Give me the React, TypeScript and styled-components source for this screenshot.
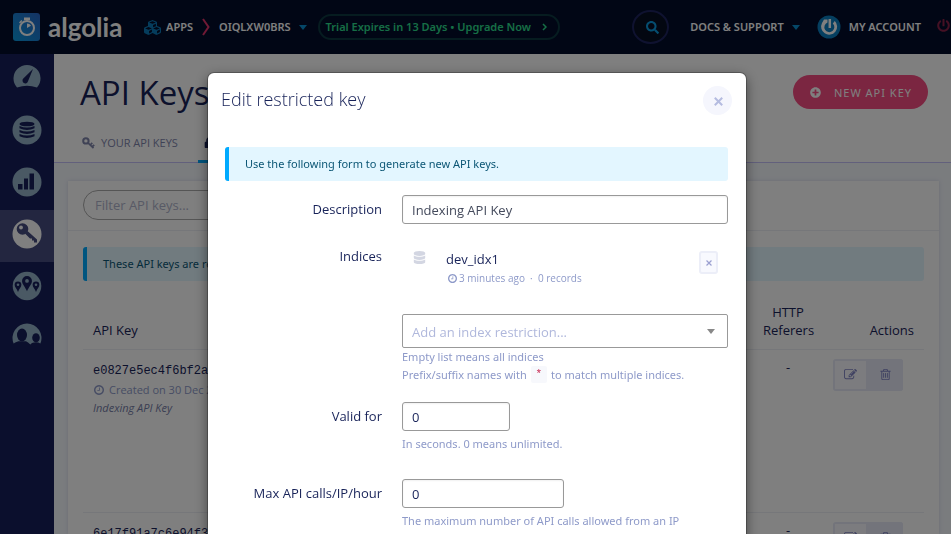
import React from "react";
import styled, { createGlobalStyle, css } from "styled-components";
import { FaCubes, FaDatabase, FaLock, FaPlusCircle, FaPowerOff, FaSearch } from "react-icons/fa";

const sans = '"Open Sans", "Noto Sans", sans-serif';
const small = '"Noto Sans", "Open Sans", sans-serif';
const navy = "#182359";
const muted = "#8e9ac9";

const GlobalStyle = createGlobalStyle`
  *, *::before, *::after { box-sizing: border-box; }
  html, body, #root { height: 100%; }
  body { margin: 0; overflow: hidden; font: 13px/18px ${sans}; color: ${navy}; background: #f5f8fd; }
  button, input, select { font-family: inherit; margin: 0; }
  a { color: inherit; text-decoration: none; }
  h1, h2, p { margin: 0; font-weight: 400; }
`;

const Page = styled.div`
  height: 100vh;
  display: flex;
  flex-direction: column;
  overflow: hidden;
`;

/* ---------- top bar ---------- */

const TopBar = styled.header`
  flex: none;
  display: flex;
  align-items: center;
  height: 54px;
  padding-left: 13px;
  overflow: hidden;
  white-space: nowrap;
  background: #020d2a;
  color: #fff;
`;

const Logo = styled.a`
  display: flex;
  align-items: center;
  gap: 8px;
  width: 131px;
  font: 700 26px/34px Lato, sans-serif;
`;

const NavLink = styled.a`
  display: flex;
  align-items: center;
  gap: 5px;
  font-family: ${small};
  font-size: 11px;
  font-weight: 600;
`;

const Caret = styled.span<{ $grey?: boolean }>`
  border: 4px solid transparent;
  border-top: 5px solid ${(p) => (p.$grey ? "#888" : "#0a8fd0")};
  border-bottom: 0;
  margin-left: 3px;
`;

const Chevron = styled.svg`
  flex: none;
  margin: 0 9px;
`;

const Trial = styled.a`
  display: flex;
  align-items: center;
  justify-content: space-between;
  width: 242px;
  height: 26px;
  margin-left: 11px;
  padding: 0 11px 0 6px;
  border: 2px solid #0c3840;
  border-radius: 13px;
  color: #2cdc8c;
  font-family: ${small};
  font-size: 11px;
  font-weight: 600;
`;

const SearchButton = styled.button`
  display: flex;
  align-items: center;
  justify-content: center;
  width: 37px;
  height: 34px;
  margin: 0 21px 0 auto;
  padding: 0 0 0 3px;
  border: 2px solid #1e2460;
  border-radius: 50%;
  background: #070f22;
  color: #0a9ae0;
`;

const Account = styled(NavLink)`
  gap: 8px;
  margin: 0 16px 0 17px;
`;

const PowerButton = styled.button`
  flex: none;
  display: flex;
  width: 14px;
  padding: 0;
  border: 0;
  background: none;
  color: #8a2148;
  margin-bottom: 3px;
`;

/* ---------- shell ---------- */

const Shell = styled.div`
  flex: 1;
  display: flex;
  min-height: 0;
`;

const Sidebar = styled.nav`
  flex: none;
  width: 54px;
  background: #171f5a;
`;

const SideItem = styled.a<{ $active?: boolean }>`
  display: flex;
  align-items: center;
  justify-content: center;
  height: 52px;
  padding-bottom: 4px;
  --disc: ${(p) => (p.$active ? "#fff" : "#94b2c8")};
  --ink: ${(p) => (p.$active ? "#464d80" : "#171f5a")};
  background: ${(p) => (p.$active ? "#464d80" : "transparent")};
`;

const Main = styled.main`
  flex: 1;
  min-width: 0;
  display: flex;
  flex-direction: column;
`;

const PageHead = styled.div`
  flex: none;
  background: #fff;
  border-bottom: 1px solid #c4c0f8;
`;

const TitleRow = styled.div`
  display: flex;
  align-items: center;
  justify-content: space-between;
  height: 76px;
  padding: 0 23px 0 26px;
`;

const PageTitle = styled.h1`
  padding-top: 2px;
  font-size: 33px;
  line-height: 40px;
`;

const NewKey = styled.button`
  display: flex;
  align-items: center;
  gap: 13px;
  height: 34px;
  padding: 0 16px 0 17px;
  border: 0;
  border-radius: 17px;
  background: #f64c82;
  color: #fff;
  font-family: ${small};
  font-size: 11px;
  letter-spacing: 1px;
`;

const Tabs = styled.div`
  display: flex;
  height: 32px;
  padding-left: 22px;
`;

const Tab = styled.a<{ $active?: boolean }>`
  display: flex;
  align-items: center;
  gap: 6px;
  padding: 0 6px 7px;
  font-size: 11px;
  color: ${(p) => (p.$active ? navy : "#7f85ab")};
  margin-bottom: -1px;
  ${(p) =>
    p.$active &&
    css`
      margin-left: 14px;
      border-bottom: 3px solid #00aaff;
      padding-bottom: 5px;
    `}
`;

const Card = styled.section`
  flex: 1;
  min-height: 0;
  margin: 18px 12px 0 14px;
  background: #fff;
  box-shadow: 0 0 4px rgba(120, 130, 180, 0.25);
  overflow: hidden;
`;

const FilterBar = styled.div`
  padding: 9px 15px 10px;
  border-bottom: 1px solid #eceef4;
`;

const FilterInput = styled.input`
  display: block;
  width: 280px;
  height: 30px;
  padding: 0 11px;
  border: 1px solid #aaa;
  border-radius: 15px;
  background: #fff;
  font-size: 13px;
  &::placeholder { color: #b0b4cc; opacity: 1; }
`;

const CardBody = styled.div`
  padding: 16px 15px 0;
`;

const Notice = styled.p`
  padding: 8px 16px;
  border-left: 4px solid #00aaff;
  border-radius: 3px;
  background: #e3f6ff;
  color: #0b5675;
  font-family: ${small};
  font-size: 11px;
  line-height: 18px;
`;

const KeyTable = styled.table`
  width: 100%;
  margin-top: 13px;
  table-layout: fixed;
  border-collapse: collapse;
  th {
    height: 55px;
    padding: 0 10px 10px;
    vertical-align: bottom;
    font-weight: 500;
  }
  td {
    height: 163px;
    padding: 9px 10px 0;
    vertical-align: top;
    border-top: 1px solid #eceef4;
  }
`;

const HeadCell = styled.th<{ $align: string; $w?: number }>`
  text-align: ${(p) => p.$align};
  width: ${(p) => (p.$w ? p.$w + "px" : "auto")};
`;

const KeyValue = styled.div`
  font: 12px/24px "Liberation Mono", monospace;
  white-space: nowrap;
`;

const Created = styled.div`
  display: flex;
  align-items: center;
  gap: 5px;
  padding-left: 1px;
  color: ${muted};
  font-size: 11px;
  line-height: 14px;
  white-space: nowrap;
`;

const KeyName = styled.em`
  display: block;
  color: #757ca6;
  font-size: 11px;
  line-height: 22px;
`;

const DashCell = styled.td`
  text-align: center;
  line-height: 16px;
`;

const Actions = styled.div`
  display: flex;
  width: 70px;
  height: 32px;
  border-radius: 3px;
  overflow: hidden;
`;

const ActionButton = styled.button<{ $filled?: boolean }>`
  flex: 1;
  display: flex;
  align-items: center;
  justify-content: center;
  padding: 0;
  border: 2px solid #e6e9f6;
  background: ${(p) => (p.$filled ? "#e6e9f6" : "#f8f9fe")};
  color: #8084c4;
`;

/* ---------- dialog ---------- */

const Backdrop = styled.div`
  position: fixed;
  inset: 0;
  display: flex;
  justify-content: center;
  align-items: flex-start;
  padding: 73px 16px 0 19px;
  overflow: hidden;
  background: rgba(0, 0, 0, 0.5);
`;

const Dialog = styled.section`
  width: 538px;
  min-height: 100vh;
  border-radius: 6px;
  background: #fff;
  box-shadow: 0 0 0 1px rgba(0, 0, 0, 0.25), 0 4px 13px rgba(0, 0, 0, 0.5);
`;

const DialogHead = styled.header`
  display: flex;
  align-items: center;
  justify-content: space-between;
  height: 54px;
  padding: 0 14px 0 13px;
`;

const DialogTitle = styled.h2`
  padding-bottom: 2px;
  font-size: 18px;
  font-weight: 300;
  line-height: 24px;
`;

const CloseButton = styled.button`
  display: flex;
  align-items: center;
  justify-content: center;
  width: 29px;
  height: 29px;
  padding: 2px 0 0 2px;
  border: 0;
  border-radius: 50%;
  background: #f5f6fd;
  color: #b5bce0;
`;

const Form = styled.form`
  padding: 20px 18px 0 17px;
`;

const Field = styled.div<{ $top: number }>`
  display: grid;
  grid-template-columns: 157px 1fr;
  column-gap: 20px;
  margin-top: ${(p) => p.$top}px;
`;

const Label = styled.label`
  padding-top: 5px;
  text-align: right;
  font-weight: 500;
  line-height: 18px;
`;

const TextInput = styled.input<{ $w?: number }>`
  display: block;
  width: ${(p) => (p.$w ? p.$w + "px" : "100%")};
  height: 29px;
  padding: 0 9px;
  border: 1px solid #999;
  border-radius: 3px;
  background: #fff;
  box-shadow: inset 0 1px 2px rgba(0, 0, 0, 0.06);
  color: #444a5c;
  font-size: 13px;
`;

const NumberInput = styled(TextInput)`
  color: ${navy};
`;

const Help = styled.p`
  margin-top: 4px;
  padding-right: 16px;
  color: ${muted};
  font-family: ${small};
  font-size: 11px;
  line-height: 18px;
`;

const SelectHelp = styled(Help)`
  margin-top: 0;
`;

const Code = styled.code`
  display: inline-block;
  height: 17px;
  margin: 0 1px;
  padding: 0 5px;
  border-radius: 2px;
  background: #f7f8fc;
  color: #c7254e;
  font: 11px/17px "Liberation Mono", monospace;
  vertical-align: top;
`;

const IndexRow = styled.div`
  display: flex;
  padding: 9px 10px 0 11px;
  color: #d3d6e2;
`;

const IndexText = styled.div`
  flex: 1;
  margin-left: 20px;
  color: ${navy};
  font-weight: 500;
  line-height: 16px;
`;

const IndexMeta = styled.div`
  display: flex;
  align-items: center;
  gap: 2px;
  padding-left: 2px;
  color: ${muted};
  font-size: 10px;
  font-weight: 400;
  line-height: 22px;
`;

const RemoveButton = styled.button`
  width: 19px;
  height: 23px;
  padding: 0;
  display: flex;
  align-items: center;
  justify-content: center;
  border: 2px solid #eceef8;
  border-radius: 3px;
  background: #f8f9fe;
  color: #9a9fd0;
`;

const SelectWrap = styled.div`
  display: grid;
  align-items: center;
  margin-top: 25px;
  > * { grid-area: 1 / 1; }
  > span { justify-self: end; margin-right: 13px; pointer-events: none; }
`;

const IndexSelect = styled.select`
  appearance: none;
  width: 100%;
  height: 34px;
  padding: 2px 9px 0;
  border: 1px solid #999;
  border-radius: 2px;
  background: #fff;
  color: #b0b8dc;
  font-size: 13px;
`;

/* ---------- icons ---------- */

const ClockIcon = ({ size }: { size: number }) => (
  <svg width={size} height={size} viewBox="0 128 1536 1536" fill="currentColor" aria-hidden>
    <path d="M896 544v448q0 14-9 23t-23 9h-320q-14 0-23-9t-9-23v-64q0-14 9-23t23-9h224v-352q0-14 9-23t23-9h64q14 0 23 9t9 23zm416 352q0-148-73-273t-198-198-273-73-273 73-198 198-73 273 73 273 198 198 273 73 273-73 198-198 73-273zm224 0q0 209-103 385.5t-279.5 279.5-385.5 103-385.5-103-279.5-279.5-103-385.5 103-385.5 279.5-279.5 385.5-103 385.5 103 279.5 279.5 103 385.5z" />
  </svg>
);

const EditIcon = () => (
  <svg width="13" height="13" viewBox="0 0 1792 1792" fill="currentColor" aria-hidden>
    <path d="M888 1184l116-116-152-152-116 116v56h96v96h56zm440-720q-16-16-33 1l-350 350q-17 17-1 33t33-1l350-350q17-17 1-33zm80 594v190q0 119-84.5 203.5t-203.5 84.5h-832q-119 0-203.5-84.5t-84.5-203.5v-832q0-119 84.5-203.5t203.5-84.5h832q63 0 117 25 15 7 18 23 3 17-9 29l-49 49q-14 14-32 8-23-6-45-6h-832q-66 0-113 47t-47 113v832q0 66 47 113t113 47h832q66 0 113-47t47-113v-126q0-13 9-22l64-64q15-15 35-7t20 29zm-96-738l288 288-672 672h-288v-288zm444 132l-92 92-288-288 92-92q28-28 68-28t68 28l152 152q28 28 28 68t-28 68z" />
  </svg>
);

const TrashIcon = () => (
  <svg width="13" height="13" viewBox="0 0 1792 1792" fill="currentColor" aria-hidden>
    <path d="M704 736v576q0 14-9 23t-23 9h-64q-14 0-23-9t-9-23v-576q0-14 9-23t23-9h64q14 0 23 9t9 23zm256 0v576q0 14-9 23t-23 9h-64q-14 0-23-9t-9-23v-576q0-14 9-23t23-9h64q14 0 23 9t9 23zm256 0v576q0 14-9 23t-23 9h-64q-14 0-23-9t-9-23v-576q0-14 9-23t23-9h64q14 0 23 9t9 23zm128 724v-948h-896v948q0 22 7 40.5t14.5 27 10.5 8.5h832q3 0 10.5-8.5t14.5-27 7-40.5zm-672-1076h448l-48-117q-7-9-17-11h-317q-10 2-17 11zm928 32v64q0 14-9 23t-23 9h-96v948q0 83-47 143.5t-113 60.5h-832q-66 0-113-58.5t-47-141.5v-952h-96q-14 0-23-9t-9-23v-64q0-14 9-23t23-9h309l70-167q15-37 54-63t79-26h320q40 0 79 26t54 63l70 167h309q14 0 23 9t9 23z" />
  </svg>
);

const CrossIcon = ({ size, stroke }: { size: number; stroke: number }) => (
  <svg width={size} height={size} viewBox="0 0 8 8" stroke="currentColor" strokeWidth={stroke} aria-hidden>
    <path d="M0.7 0.7 7.3 7.3M7.3 0.7 0.7 7.3" />
  </svg>
);

const OutlineKeyIcon = () => (
  <svg width="13" height="12" viewBox="0 0 13 12" fill="none" stroke="currentColor" aria-hidden>
    <circle cx="3.900" cy="3.900" r="2.700" strokeWidth="2" />
    <path d="M6 5.800 11.500 11.200M8.200 8 10.300 5.900M10.200 9.900 12.200 7.900" strokeWidth="1.700" />
  </svg>
);

const LogoMark = () => (
  <svg width="27" height="28" viewBox="0 0 27 28" aria-hidden>
    <defs>
      <linearGradient id="mark" x1="0" y1="1" x2="1" y2="0">
        <stop offset="0" stopColor="#0a9ae0" />
        <stop offset="1" stopColor="#2a66c8" />
      </linearGradient>
    </defs>
    <rect width="27" height="28" rx="3" fill="url(#mark)" />
    <circle cx="14" cy="15" r="7" fill="none" stroke="#fff" strokeWidth="2" />
    <path d="M11 4.500h6v2.500h-6zM6 9.500 8.300 7l1 1L7 10.500z" fill="#fff" />
    <path d="M14 10.500v4.500l4-2.200a4.600 4.600 0 0 0-4-2.300z" fill="#fff" />
  </svg>
);

const Avatar = () => (
  <svg width="24" height="24" viewBox="0 0 24 24" aria-hidden>
    <circle cx="12" cy="12" r="11.500" fill="#0b7fc0" />
    <path d="M7 4.500H10.500V7.500A5 5 0 1 0 15.800 8.500L17.800 6A8 8 0 1 1 5 8z" fill="#fff" />
    <path d="M12.800 4v9" stroke="#fff" strokeWidth="2.500" />
  </svg>
);

const disc = "var(--disc)";
const ink = "var(--ink)";

const GaugeIcon = () => (
  <svg width="30" height="30" viewBox="0 0 30 30" aria-hidden>
    <path d="M5 24.500A13.500 13.500 0 1 1 25 24.500Q15 21 5 24.500z" fill={disc} />
    <path d="M21 6 16 18.300A2.800 2.800 0 1 1 11.300 15.600z" fill={ink} />
  </svg>
);

const StackIcon = () => (
  <svg width="30" height="30" viewBox="0 0 30 30" aria-hidden>
    <circle cx="15" cy="15" r="14.500" fill={disc} />
    <g fill={ink}>
      <ellipse cx="15" cy="9" rx="7.500" ry="2.300" />
      <path d="M7.500 11q7.500 3 15 0v2.200q-7.500 3.600-15 0zM7.500 15q7.500 3 15 0v2.200q-7.500 3.600-15 0zM7.500 19q7.500 3 15 0v2.200q-7.500 3.600-15 0z" />
    </g>
  </svg>
);

const BarsIcon = () => (
  <svg width="30" height="30" viewBox="0 0 30 30" aria-hidden>
    <circle cx="15" cy="15" r="14.500" fill={disc} />
    <path d="M6 17h4.500v5.500H6zM12 11.500h4v11h-4zM17.500 6.500H22v16h-4.500z" fill={ink} />
  </svg>
);

const KeyIcon = () => (
  <svg width="30" height="30" viewBox="0 0 30 30" aria-hidden>
    <circle cx="15" cy="15" r="14.500" fill={disc} />
    <circle cx="10.500" cy="10" r="5.800" fill={ink} />
    <circle cx="9" cy="8.500" r="1.900" fill={disc} />
    <path d="M13 14.500 15.500 12 25 20.500V23.500H22V21.500H20V19.500H18z" fill={ink} />
  </svg>
);

const pin = "M0-5.500A4.500 4.500 0 0 1 4.500-1C4.500 2 1.500 4.500 0 8.500-1.500 4.500-4.500 2-4.500-1A4.500 4.500 0 0 1 0-5.500z";

const PinsIcon = () => (
  <svg width="30" height="30" viewBox="0 0 30 30" aria-hidden>
    <circle cx="15" cy="15" r="14.300" fill={disc} />
    {[["15", "11", 1.1], ["6", "14.500", 0.75], ["24", "14.500", 0.75]].map(([x, y, s]) => (
      <g key={x} transform={`translate(${x} ${y}) scale(${s})`}>
        <path d={pin} fill={ink} />
        <circle cy="-1" r="1.700" fill={disc} />
      </g>
    ))}
  </svg>
);

const UsersIcon = () => (
  <svg width="30" height="30" viewBox="0 0 30 30" aria-hidden>
    <path d="M1.600 20.500A14.500 14.500 0 1 1 28.400 20.500Q26.500 19.300 24 19.300T20 20L18.300 21.500Q16 19 14 18.300H6.500Q3.500 19 1.600 20.500z" fill={disc} />
    <ellipse cx="10" cy="12" rx="5" ry="6.500" fill={ink} />
    <ellipse cx="24" cy="14.800" rx="3.800" ry="4.500" fill={ink} />
  </svg>
);

const sideItems = [
  { name: "Dashboard", Icon: GaugeIcon },
  { name: "Indices", Icon: StackIcon },
  { name: "Analytics", Icon: BarsIcon },
  { name: "API Keys", Icon: KeyIcon, active: true },
  { name: "Infrastructure", Icon: PinsIcon },
  { name: "Team", Icon: UsersIcon },
];

const keys = [
  { value: "e0827e5ec4f6bf2a81", created: "Created on 30 Dec 2016", name: "Indexing API Key" },
  { value: "6e17f91a7c6e94f3b2", created: "Created on 30 Dec 2016", name: "Search API Key" },
];

export default function App() {
  return (
    <>
      <GlobalStyle />
      <Page>
        <TopBar>
          <Logo href="#"><LogoMark />algolia</Logo>
          <NavLink href="#apps"><FaCubes size={17} color="#0a78b8" />APPS</NavLink>
          <Chevron width="8" height="18" viewBox="0 0 8 18" fill="none" stroke="#e0336a" strokeWidth="2">
            <path d="M1 1 6.500 9 1 17" />
          </Chevron>
          <NavLink href="#app">OIQLXW0BRS<Caret /></NavLink>
          <Trial href="#upgrade">
            Trial Expires in 13 Days • Upgrade Now
            <svg width="5" height="8" viewBox="0 0 5 8" fill="none" stroke="currentColor" strokeWidth="1.500"><path d="M1 1 4 4 1 7" /></svg>
          </Trial>
          <SearchButton aria-label="Search"><FaSearch size={13} /></SearchButton>
          <NavLink href="#docs">DOCS &amp; SUPPORT<Caret /></NavLink>
          <Account href="#account"><Avatar />MY ACCOUNT</Account>
          <PowerButton aria-label="Log out"><FaPowerOff size={13} /></PowerButton>
        </TopBar>
        <Shell>
          <Sidebar>
            {sideItems.map(({ name, Icon, active }) => (
              <SideItem key={name} href="#" aria-label={name} $active={active}><Icon /></SideItem>
            ))}
          </Sidebar>
          <Main>
            <PageHead>
              <TitleRow>
                <PageTitle>API Keys</PageTitle>
                <NewKey><FaPlusCircle size={11} />NEW API KEY</NewKey>
              </TitleRow>
              <Tabs>
                <Tab href="#yours"><OutlineKeyIcon />YOUR API KEYS</Tab>
                <Tab href="#restricted" $active><FaLock size={11} />RESTRICTED API KEYS</Tab>
              </Tabs>
            </PageHead>
            <Card>
              <FilterBar><FilterInput aria-label="Filter API keys" placeholder="Filter API keys..." /></FilterBar>
              <CardBody>
                <Notice>These API keys are restricted.</Notice>
                <KeyTable>
                  <thead>
                    <tr>
                      <HeadCell $align="left">API Key</HeadCell>
                      <HeadCell $align="center" $w={70}>HTTP Referers</HeadCell>
                      <HeadCell $align="right" $w={101}>Actions</HeadCell>
                    </tr>
                  </thead>
                  <tbody>
                    {keys.map((k) => (
                      <tr key={k.value}>
                        <td>
                          <KeyValue>{k.value}</KeyValue>
                          <Created><ClockIcon size={10} />{k.created}</Created>
                          <KeyName>{k.name}</KeyName>
                        </td>
                        <DashCell>-</DashCell>
                        <td>
                          <Actions>
                            <ActionButton aria-label="Edit"><EditIcon /></ActionButton>
                            <ActionButton aria-label="Delete" $filled><TrashIcon /></ActionButton>
                          </Actions>
                        </td>
                      </tr>
                    ))}
                  </tbody>
                </KeyTable>
              </CardBody>
            </Card>
          </Main>
        </Shell>
      </Page>
      <Backdrop>
        <Dialog role="dialog" aria-modal="true" aria-labelledby="dialog-title">
          <DialogHead>
            <DialogTitle id="dialog-title">Edit restricted key</DialogTitle>
            <CloseButton aria-label="Close"><CrossIcon size={9} stroke={1.8} /></CloseButton>
          </DialogHead>
          <Form>
            <Notice>Use the following form to generate new API keys.</Notice>
            <Field $top={14}>
              <Label htmlFor="description">Description</Label>
              <TextInput id="description" defaultValue="Indexing API Key" />
            </Field>
            <Field $top={18}>
              <Label htmlFor="indices">Indices</Label>
              <div>
                <IndexRow>
                  <FaDatabase size={13} />
                  <IndexText>
                    dev_idx1
                    <IndexMeta><ClockIcon size={9} />3 minutes ago&nbsp; ·&nbsp; 0 records</IndexMeta>
                  </IndexText>
                  <RemoveButton type="button" aria-label="Remove dev_idx1"><CrossIcon size={6} stroke={1.6} /></RemoveButton>
                </IndexRow>
                <SelectWrap>
                  <IndexSelect id="indices" defaultValue="">
                    <option value="">Add an index restriction...</option>
                  </IndexSelect>
                  <Caret $grey />
                </SelectWrap>
                <SelectHelp>
                  Empty list means all indices<br />
                  Prefix/suffix names with <Code>*</Code> to match multiple indices.
                </SelectHelp>
              </div>
            </Field>
            <Field $top={18}>
              <Label htmlFor="valid">Valid for</Label>
              <div>
                <NumberInput id="valid" $w={108} defaultValue="0" />
                <Help>In seconds. 0 means unlimited.</Help>
              </div>
            </Field>
            <Field $top={26}>
              <Label htmlFor="max">Max API calls/IP/hour</Label>
              <div>
                <NumberInput id="max" $w={162} defaultValue="0" />
                <Help>The maximum number of API calls allowed from an IP address per hour. 0 means unlimited.</Help>
              </div>
            </Field>
          </Form>
        </Dialog>
      </Backdrop>
    </>
  );
}
